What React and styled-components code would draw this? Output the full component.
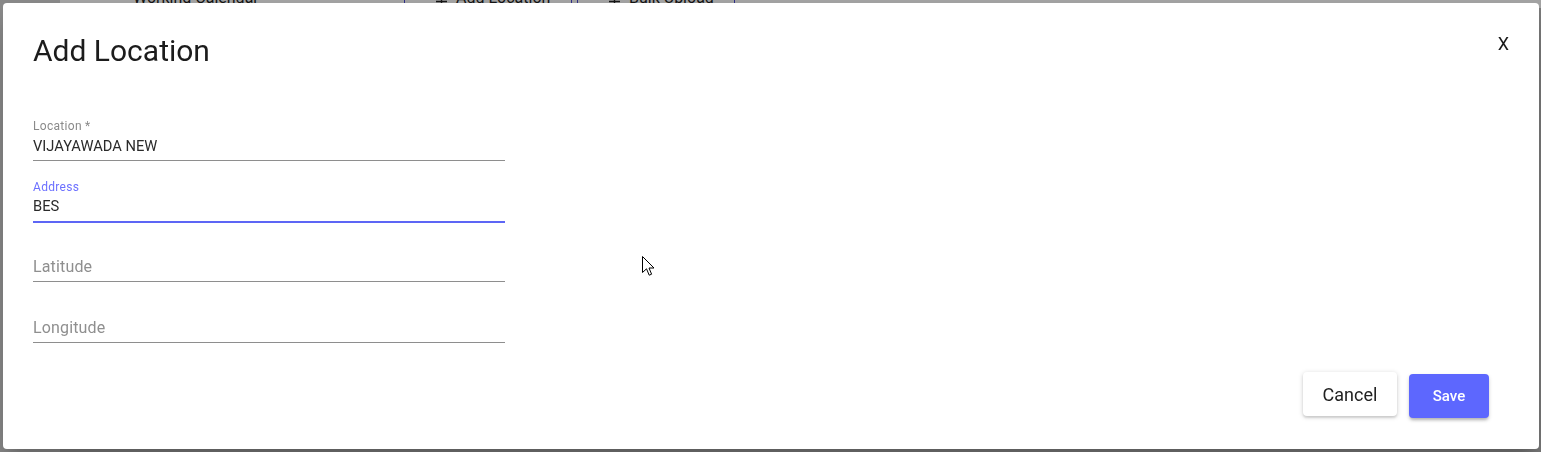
import React from 'react';
import styled, { createGlobalStyle } from 'styled-components';

const GlobalStyle = createGlobalStyle`
	html, body {
		margin: 0;
		padding: 0;
		height: 100%;
		overflow: hidden;
		font-family: Roboto, "Liberation Sans", Arial, sans-serif;
	}
	* {
		box-sizing: border-box;
	}
`;

const Page = styled.div`
	height: 100vh;
	display: flex;
	background-color: #f4f4f4;
`;

const SideRail = styled.div`
	width: 60px;
	flex-shrink: 0;
	background-color: #d2d2d2;
`;

const PageMain = styled.div`
	flex-grow: 1;
	display: flex;
	flex-direction: column;
`;

const PageToolbar = styled.div`
	margin-top: -12px;
	height: 20px;
	display: flex;
	align-items: flex-end;
	padding-left: 73px;
	color: #1e1e1e;
	font-size: 16px;
	background-color: #fafafa;
`;

const PageTitle = styled.div`
	width: 271px;
	line-height: 20px;
`;

const TabGroup = styled.div`
	display: flex;
	gap: 5px;
`;

const Tab = styled.div`
	width: ${({ w }) => w}px;
	height: 20px;
	border-left: 1px solid #4a4ad0;
	border-right: 1px solid #4a4ad0;
	display: flex;
	align-items: flex-end;
	padding-left: 30px;
	gap: 8px;
	line-height: 20px;
`;

const PageBody = styled.div`
	flex-grow: 1;
	background-color: #bcbcbc;
`;

const Backdrop = styled.div`
	position: fixed;
	inset: 0;
	background-color: rgba(0, 0, 0, 0.35);
`;

const Dialog = styled.div`
	position: fixed;
	top: 3px;
	left: 3px;
	width: 1536px;
	background-color: #fff;
	border-radius: 4px;
	padding: 30px 30px 31px 30px;
	box-shadow: 0 11px 15px -7px rgba(0, 0, 0, 0.2), 0 24px 38px 3px rgba(0, 0, 0, 0.14);
	color: #212121;
`;

const DialogHeader = styled.div`
	display: flex;
	justify-content: space-between;
	align-items: flex-start;
`;

const DialogTitle = styled.h2`
	margin: 0;
	font-size: 30px;
	line-height: 36px;
	font-weight: 400;
	color: #1c1c1c;
`;

const CloseButton = styled.button`
	border: none;
	background: none;
	padding: 0;
	font-family: inherit;
	font-size: 18px;
	line-height: 22px;
	color: #1a1a1a;
	cursor: pointer;
`;

const Form = styled.div`
	margin-top: 48px;
	width: 472px;
	display: flex;
	flex-direction: column;
	gap: 16.7px;
`;

const Field = styled.div`
	display: flex;
	flex-direction: column;
`;

const Label = styled.label`
	height: 16px;
	padding-top: 2px;
	font-size: 12px;
	line-height: 14px;
	letter-spacing: 0.3px;
	color: ${({ focused }) => (focused ? '#6c70ff' : '#8a8a8a')};
`;

const Input = styled.input`
	border: none;
	border-bottom: ${({ focused }) => (focused ? '2px solid #5d66f5' : '1px solid #8e8e8e')};
	margin-bottom: ${({ focused }) => (focused ? '-1px' : '0')};
	height: ${({ focused }) => (focused ? '29px' : '28px')};
	padding: 0 0 2px 0;
	outline: none;
	background: transparent;
	font-family: inherit;
	font-size: 14.7px;
	color: #2a2a2a;
	&::placeholder {
		font-size: 16px;
		letter-spacing: 0.15px;
		color: #8f8f8f;
	}
`;

const Footer = styled.div`
	margin-top: 29px;
	padding-right: 20px;
	display: flex;
	justify-content: flex-end;
	align-items: flex-start;
	gap: 12px;
`;

const Button = styled.button`
	height: 44px;
	width: ${({ primary }) => (primary ? '80px' : '94px')};
	margin-top: ${({ primary }) => (primary ? '2px' : '0')};
	border: none;
	border-radius: 4px;
	font-family: inherit;
	font-size: ${({ primary }) => (primary ? '15px' : '18px')};
	font-weight: ${({ primary }) => (primary ? 500 : 400)};
	color: ${({ primary }) => (primary ? '#fff' : '#222')};
	background-color: ${({ primary }) => (primary ? '#5d67fe' : '#fff')};
	box-shadow: ${({ primary }) => (primary
		? '0 3px 3px -1px rgba(0,0,0,0.2), 0 2px 4px rgba(0,0,0,0.14)'
		: '0 1px 5px rgba(0,0,0,0.18), 0 2px 2px rgba(0,0,0,0.1)')};
	cursor: pointer;
`;

const Cursor = styled.svg`
	position: absolute;
	left: 639px;
	top: 253px;
	pointer-events: none;
`;

const fields = [
	{ name: 'Location *', value: 'VIJAYAWADA NEW' },
	{ name: 'Address', value: 'BES', focused: true },
	{ name: 'Latitude', value: '' },
	{ name: 'Longitude', value: '' },
];

const PlusIcon = () => (
	<svg width="13" height="13" viewBox="0 0 13 13">
		<path d="M6.5 1v11M1 6.5h11" stroke="#222" strokeWidth="1.4" />
	</svg>
);

export default function App() {
	return (
		<>
			<GlobalStyle />
			<Page>
				<SideRail />
				<PageMain>
					<PageToolbar>
						<PageTitle>Working Calendar</PageTitle>
						<TabGroup>
							<Tab w={168}><PlusIcon />Add Location</Tab>
							<Tab w={158}><PlusIcon />Bulk Upload</Tab>
						</TabGroup>
					</PageToolbar>
					<PageBody />
				</PageMain>
			</Page>
			<Backdrop />
			<Dialog>
				<DialogHeader>
					<DialogTitle>Add Location</DialogTitle>
					<CloseButton>X</CloseButton>
				</DialogHeader>
				<Form>
					{fields.map((f) => (
						<Field key={f.name}>
							<Label focused={f.focused}>{f.value ? f.name : ''}</Label>
							<Input
								focused={f.focused}
								defaultValue={f.value}
								placeholder={f.value ? '' : f.name}
							/>
						</Field>
					))}
				</Form>
				<Footer>
					<Button>Cancel</Button>
					<Button primary>Save</Button>
				</Footer>
				<Cursor width="13" height="21" viewBox="0 0 13 21">
					<path
						d="M0.5 0.5 L0.5 16.5 L4.5 12.8 L7.2 19.2 L9.6 18.2 L7 12 L12 12 Z"
						fill="#fff"
						stroke="#000"
						strokeWidth="1"
						strokeLinejoin="round"
					/>
				</Cursor>
			</Dialog>
		</>
	);
}
